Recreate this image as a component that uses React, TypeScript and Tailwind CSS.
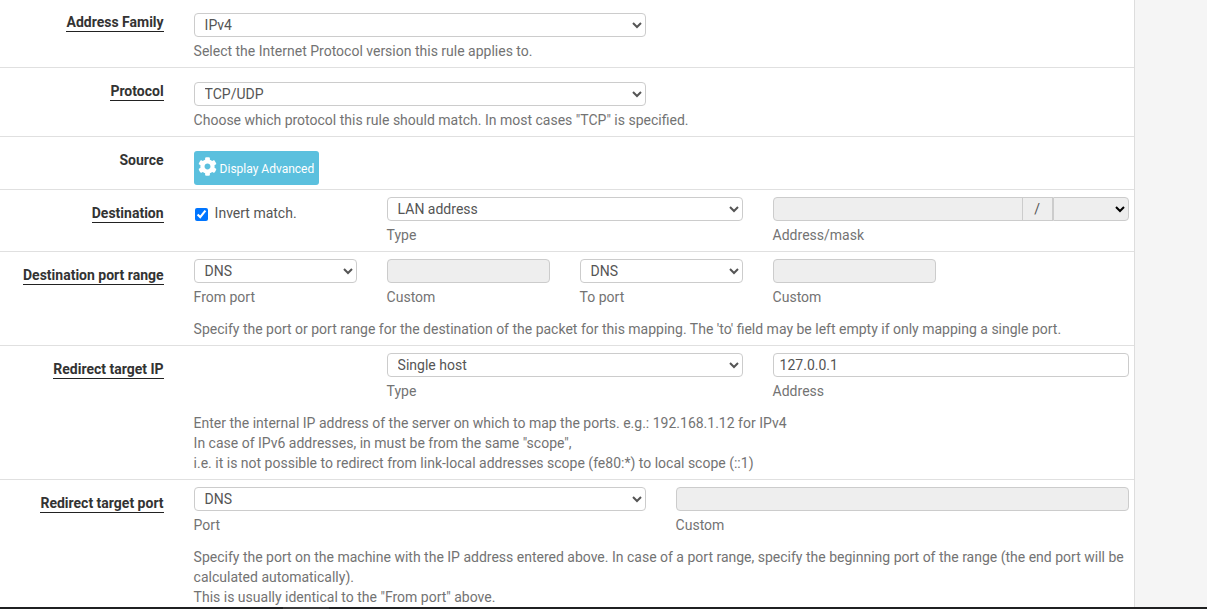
import type { ReactNode } from 'react';
import { FaCog } from 'react-icons/fa';

const selectCls =
  'h-6 rounded-[4px] border border-[#ccc] bg-white pl-[6px] text-[14px] leading-none text-[#555] outline-none';
const disabledCls = 'h-6 rounded-[4px] border border-[#ccc] bg-[#eee]';
const helpCls = 'text-[14px] leading-[20px] text-[#737373]';

function Row({
  label,
  underline = true,
  className,
  children,
}: {
  label: string;
  underline?: boolean;
  className: string;
  children: ReactNode;
}) {
  return (
    <div className={`flex shrink-0 border-b border-[#e0e0e0] ${className}`}>
      <div className="w-[163.6px] shrink-0 text-right text-[14px] font-bold leading-[18px] text-[#333]">
        <span className={underline ? 'border-b border-[#222] pb-px' : ''}>{label}</span>
      </div>
      <div className="ml-[30px] min-w-0 flex-1">{children}</div>
    </div>
  );
}

function Select({ value, className }: { value: string; className: string }) {
  return (
    <select defaultValue={value} className={`${selectCls} ${className}`}>
      <option>{value}</option>
    </select>
  );
}

function Field({ caption, children }: { caption: string; children: ReactNode }) {
  return (
    <div className="flex w-[163px] shrink-0 flex-col">
      {children}
      <span className={`${helpCls} mt-[4px]`}>{caption}</span>
    </div>
  );
}

export default function App() {
  return (
    <div className="flex h-[609px] flex-col overflow-hidden bg-[#f5f5f5] font-['Roboto',sans-serif]">
      <div className="min-h-0 flex-1 overflow-hidden">
        <div className="flex w-[1135px] flex-col border-r border-[#ddd] bg-white">
          <Row label="Address Family" className="h-[68px] pt-[13px]">
            <Select value="IPv4" className="block w-[452px]" />
            <p className={`${helpCls} mt-[4px]`}>Select the Internet Protocol version this rule applies to.</p>
          </Row>
          <Row label="Protocol" className="h-[69px] pt-[14px]">
            <Select value="TCP/UDP" className="block w-[452px]" />
            <p className={`${helpCls} mt-[4px]`}>Choose which protocol this rule should match. In most cases "TCP" is specified.</p>
          </Row>
          <Row label="Source" underline={false} className="h-[53px] pt-[14px]">
            <button
              type="button"
              className="flex h-[34px] w-[125px] items-center gap-[3px] rounded-[3px] bg-[#5bc0de] pl-[4px] text-[12px] text-white"
            >
              <FaCog size={19} className="-mt-[3px] shrink-0" />
              <span className="mt-[2px]">Display Advanced</span>
            </button>
          </Row>
          <Row label="Destination" className="h-[62px] pt-[14px]">
            <div className="-mt-[7px] flex gap-[30px]">
              <label className="flex w-[163px] shrink-0 items-start text-[14px] leading-[18px] text-[#555]">
                <input type="checkbox" defaultChecked className="ml-px mt-[11px] h-[13px] w-[13px] accent-[#0075ff]" />
                <span className="ml-[7px] mt-[7px]">Invert match.</span>
              </label>
              <div className="flex w-[356px] shrink-0 flex-col">
                <Select value="LAN address" className="w-full" />
                <span className={`${helpCls} mt-[4px]`}>Type</span>
              </div>
              <div className="flex w-[356px] shrink-0 flex-col">
                <div className="flex h-6">
                  <div className="flex-1 rounded-l-[4px] border border-[#ccc] bg-[#eee]" />
                  <div className="-ml-px flex w-[31px] items-center justify-center border border-[#ccc] bg-[#eee] text-[14px] text-[#555]">/</div>
                  <select disabled className="w-[76px] rounded-r-[4px] border border-[#ccc] bg-[#eee] text-[14px] opacity-100" />
                </div>
                <span className={`${helpCls} mt-[4px]`}>Address/mask</span>
              </div>
            </div>
          </Row>
          <Row label="Destination port range" className="h-[94px] pt-[14px]">
            <div className="-mt-[7px] flex gap-[30px]">
              <Field caption="From port"><Select value="DNS" className="w-full" /></Field>
              <Field caption="Custom"><div className={disabledCls} /></Field>
              <Field caption="To port"><Select value="DNS" className="w-full" /></Field>
              <Field caption="Custom"><div className={disabledCls} /></Field>
            </div>
            <p className={`${helpCls} mt-[12px]`}>Specify the port or port range for the destination of the packet for this mapping. The 'to' field may be left empty if only mapping a single port.</p>
          </Row>
          <Row label="Redirect target IP" className="h-[134px] pt-[14px]">
            <div className="-mt-[7px] flex gap-[30px]">
              <div className="w-[163px] shrink-0" />
              <div className="flex w-[356px] shrink-0 flex-col">
                <Select value="Single host" className="w-full" />
                <span className={`${helpCls} mt-[4px]`}>Type</span>
              </div>
              <div className="flex w-[356px] shrink-0 flex-col">
                <input
                  defaultValue="127.0.0.1"
                  className="h-6 rounded-[4px] border border-[#ccc] bg-white px-[6px] text-[14px] text-[#555] outline-none"
                />
                <span className={`${helpCls} mt-[4px]`}>Address</span>
              </div>
            </div>
            <p className={`${helpCls} mt-[12px]`}>
              Enter the internal IP address of the server on which to map the ports. e.g.: 192.168.1.12 for IPv4
              <br />
              In case of IPv6 addresses, in must be from the same "scope",
              <br />
              i.e. it is not possible to redirect from link-local addresses scope (fe80:*) to local scope (::1)
            </p>
          </Row>
          <div className="flex pt-[14px]">
            <div className="w-[163.6px] shrink-0 text-right text-[14px] font-bold leading-[18px] text-[#333]">
              <span className="border-b border-[#222] pb-px">Redirect target port</span>
            </div>
            <div className="ml-[30px] min-w-0 flex-1 pr-[5px]">
              <div className="-mt-[7px] flex gap-[30px]">
                <div className="flex w-[452px] shrink-0 flex-col">
                  <Select value="DNS" className="w-full" />
                  <span className={`${helpCls} mt-[4px]`}>Port</span>
                </div>
                <div className="flex w-[453px] shrink-0 flex-col">
                  <div className={disabledCls} />
                  <span className={`${helpCls} mt-[4px]`}>Custom</span>
                </div>
              </div>
              <p className={`${helpCls} mt-[12px]`}>
                Specify the port on the machine with the IP address entered above. In case of a port range, specify the beginning port of the range (the end port will be calculated automatically).
                <br />
                This is usually identical to the "From port" above.
              </p>
            </div>
          </div>
        </div>
      </div>
      <div className="flex h-[2px] shrink-0 bg-[#1f2021] pl-[283px]">
        <div className="w-[46px] bg-[#3a3a3a]" />
      </div>
    </div>
  );
}
